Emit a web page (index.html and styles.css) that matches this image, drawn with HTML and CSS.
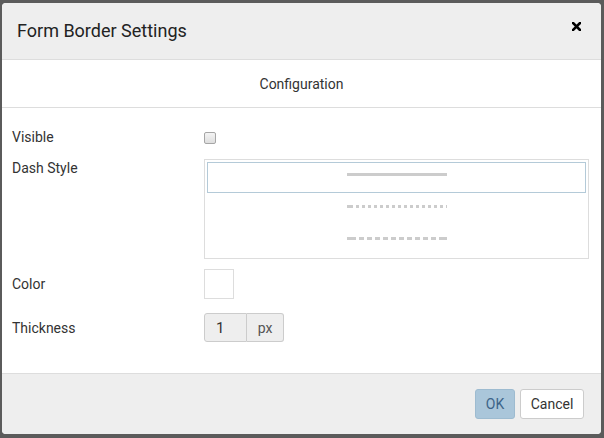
FILE: index.html
```html
<!DOCTYPE html>
<html>
<head>
<meta charset="utf-8">
<link rel="stylesheet" href="styles.css">
</head>
<body>
<div class="dialog">
  <div class="header">
    <div class="title">Form Border Settings</div>
    <svg class="close" width="9" height="9" viewBox="0 0 9 9"><path d="M1 1L8 8M8 1L1 8" stroke="#000" stroke-width="2.6" stroke-linecap="square"/></svg>
  </div>
  <div class="tabs">Configuration</div>
  <div class="content">
    <div class="row row-visible">
      <div class="label">Visible</div>
      <div class="checkbox"></div>
    </div>
    <div class="row row-dash">
      <div class="label">Dash Style</div>
      <div class="listbox">
        <div class="item selected"><svg width="100" height="3"><line x1="0" y1="1.5" x2="100" y2="1.5" stroke="#ccc" stroke-width="3"/></svg></div>
        <div class="item"><svg width="100" height="3"><line x1="0" y1="1.5" x2="100" y2="1.5" stroke="#ccc" stroke-width="3" stroke-dasharray="6 3 3 3 3 3 3 3 3 3 3 3 3 3 3 3 3 3 3 3 3 3 3 3 3 3 3 3 3 3 3 3 3 3 6"/></svg></div>
        <div class="item"><svg width="100" height="3"><line x1="0" y1="1.5" x2="100" y2="1.5" stroke="#ccc" stroke-width="3" stroke-dasharray="9 3 5 3 5 3 5 3 5 3 5 3 5 3 5 3 5 3 5 3 5 3 9"/></svg></div>
      </div>
    </div>
    <div class="row row-color">
      <div class="label">Color</div>
      <div class="swatch"></div>
    </div>
    <div class="row row-thick">
      <div class="label">Thickness</div>
      <div class="input-group">
        <div class="num">1</div>
        <div class="addon">px</div>
      </div>
    </div>
  </div>
  <div class="footer">
    <div class="btn btn-ok">OK</div>
    <div class="btn btn-cancel">Cancel</div>
  </div>
</div>
</body>
</html>
```
FILE: styles.css
```css
* { box-sizing: border-box; }
html, body { margin: 0; height: 438px; }
body {
  background: #5b5b5b;
  padding: 3px 3px 4px 2px;
  font-family: Roboto, "Liberation Sans", sans-serif;
  color: #333;
  overflow: hidden;
}
.dialog {
  width: 599px;
  height: 431px;
  background: #fff;
  border-radius: 4px;
  display: flex;
  flex-direction: column;
  overflow: hidden;
}
.header {
  height: 57px;
  flex: none;
  background: #eee;
  border-bottom: 1px solid #ddd;
  display: flex;
  justify-content: space-between;
  align-items: flex-start;
  padding-left: 15px;
  padding-right: 20px;
}
.title {
  align-self: center;
  font-size: 18px;
  color: #222;
  margin-top: -1px;
}
.close { margin-top: 19px; display: block; }
.tabs {
  height: 48px;
  flex: none;
  border-bottom: 1px solid #ddd;
  display: flex;
  align-items: center;
  justify-content: center;
  font-size: 14px;
  color: #333;
}
.content {
  flex: 1;
  padding: 19px 0 0 10px;
}
.row { display: flex; }
.label {
  width: 192px;
  font-size: 14px;
  line-height: 18px;
  flex: none;
}
.row-visible { height: 18px; margin-bottom: 14px; align-items: flex-start; }
.row-visible .label { margin-top: 1px; }
.checkbox {
  width: 12px;
  height: 12px;
  margin-top: 5px;
  border: 1px solid #a6a6a6;
  border-radius: 2px;
  background: linear-gradient(#f4f4f4, #dedede);
}
.row-dash { align-items: flex-start; }
.listbox {
  width: 385px;
  height: 100px;
  border: 1px solid #ddd;
  padding: 2px;
}
.item {
  height: 31px;
  margin-bottom: 1px;
  border: 1px solid transparent;
  display: flex;
  justify-content: center;
  padding-top: 10px;
}
.item svg { display: block; margin-left: 1px; }
.item.selected { border-color: #b4cad8; }
.row-color { align-items: center; margin-top: 10px; }
.swatch {
  width: 30px;
  height: 30px;
  border: 1px solid #ddd;
  background: #fff;
}
.row-thick { align-items: center; margin-top: 14px; }
.input-group { display: flex; height: 29px; }
.num {
  width: 43px;
  background: #eee;
  border: 1px solid #ccc;
  border-radius: 3px 0 0 3px;
  font-size: 15px;
  padding-left: 11px;
  display: flex;
  align-items: center;
  color: #333;
}
.addon {
  width: 37px;
  background: #eee;
  border: 1px solid #ccc;
  border-left: none;
  border-radius: 0 3px 3px 0;
  font-size: 14px;
  display: flex;
  align-items: center;
  justify-content: center;
  color: #555;
}
.footer {
  height: 61px;
  flex: none;
  background: #eee;
  border-top: 1px solid #ddd;
  display: flex;
  justify-content: flex-end;
  align-items: flex-start;
  padding: 15px 17px 0 0;
  gap: 5px;
}
.btn {
  height: 30px;
  border-radius: 3px;
  font-size: 14px;
  display: flex;
  align-items: center;
  justify-content: center;
  border: 1px solid;
}
.btn-ok {
  width: 40px;
  background: #aac6da;
  border-color: #9dbbd0;
  color: #3d6488;
}
.btn-cancel {
  width: 64px;
  background: #fff;
  border-color: #ccc;
  color: #333;
}
```
